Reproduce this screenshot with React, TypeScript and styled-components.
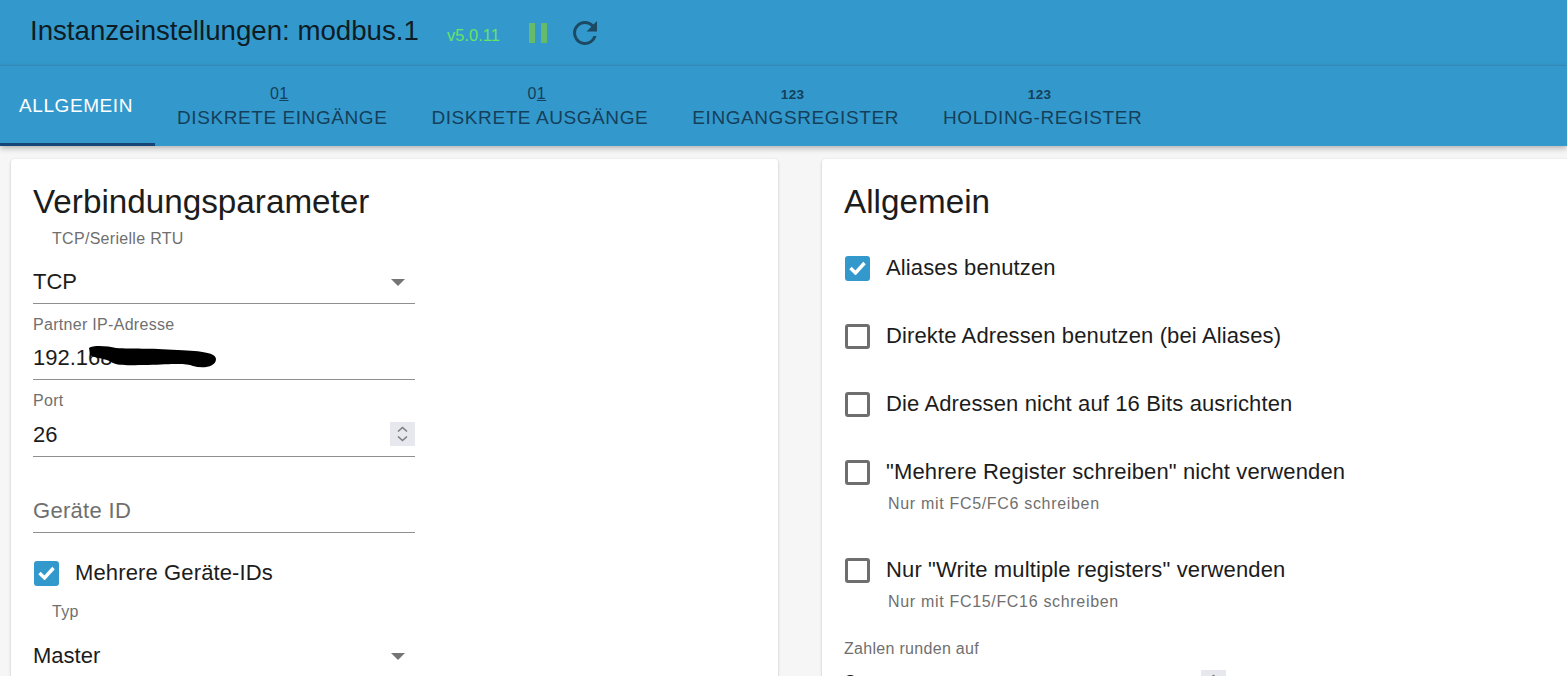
import React from "react";
import styled, { createGlobalStyle } from "styled-components";

const Global = createGlobalStyle`
  html, body { margin: 0; padding: 0; height: 100%; overflow: hidden; background: #f6f6f6; }
  body { font-family: "Liberation Sans", Arial, sans-serif; color: #1c1c1c; }
  #root { height: 100%; }
`;

const Page = styled.div`
  height: 676px;
  overflow: hidden;
  display: flex;
  flex-direction: column;
`;

const TitleBar = styled.header`
  height: 65px;
  flex: none;
  background: #3399cc;
  display: flex;
  align-items: center;
  padding-left: 30px;
  border-bottom: 1px solid #3a90bf;
`;

const Title = styled.h1`
  margin: 0 0 4px;
  font-size: 27.65px;
  font-weight: 400;
  line-height: 30px;
  color: #0e1c26;
  width: 417px;
  white-space: nowrap;
`;

const Version = styled.span`
  font-size: 16.5px;
  color: #66e466;
  width: 82px;
  margin-top: 5px;
`;

const PauseIcon = styled.svg`
  width: 18px;
  height: 20px;
  fill: #66bb6a;
  margin-right: 20px;
`;

const RefreshIcon = styled.svg`
  width: 36px;
  height: 36px;
  fill: #1d4a63;
`;

const TabBar = styled.nav`
  height: 80px;
  flex: none;
  background: #3399cc;
  display: flex;
  box-shadow: 0 2px 6px rgba(0, 0, 0, 0.3);
  position: relative;
  z-index: 1;
`;

const Tab = styled.div<{ $active?: boolean }>`
  box-sizing: border-box;
  padding: 0 22px 0 ${(p) => (p.$active ? "19px" : "22px")};
  display: flex;
  flex-direction: column;
  align-items: center;
  justify-content: flex-end;
  padding-bottom: ${(p) => (p.$active ? "27px" : "15px")};
  font-size: 19px;
  line-height: 21px;
  letter-spacing: 0.58px;
  white-space: nowrap;
  color: ${(p) => (p.$active ? "#ffffff" : "#153f5a")};
  border-bottom: 3px solid ${(p) => (p.$active ? "#164477" : "transparent")};
`;

const TabGlyph = styled.span<{ $bold?: boolean }>`
  font-size: ${(p) => (p.$bold ? "13.5px" : "16px")};
  font-weight: ${(p) => (p.$bold ? 700 : 400)};
  line-height: 16px;
  letter-spacing: 0.4px;
  margin: 0 6px ${(p) => (p.$bold ? "4px" : "5px")} 0;
  u { text-underline-offset: 1px; }
`;

const Columns = styled.main`
  flex: 1;
  min-height: 0;
  display: grid;
  grid-template-columns: 767px 767px;
  column-gap: 44px;
  padding: 13px 0 0 11px;
`;

const Card = styled.section`
  background: #ffffff;
  border-radius: 4px;
  box-shadow: 0 1px 3px rgba(0, 0, 0, 0.22);
  padding: 20px 22px 0;
  height: 700px;
`;

const CardTitle = styled.h2`
  margin: 0;
  height: 44px;
  font-size: 33.25px;
  font-weight: 400;
  line-height: 46px;
  color: #1c1c1c;
`;

const Field = styled.div<{ $pad: number }>`
  width: 382px;
  padding-top: ${(p) => p.$pad}px;
  border-bottom: 1px solid #8f8f8f;
  display: flex;
  flex-direction: column;
  position: relative;
`;

const FieldLabel = styled.label<{ $indent?: boolean; $top?: number }>`
  display: block;
  font-size: 16px;
  line-height: 18px;
  letter-spacing: 0.3px;
  color: #6f6f6f;
  padding-left: ${(p) => (p.$indent ? "19px" : "0")};
  margin-top: ${(p) => p.$top ?? 0}px;
`;

const ValueRow = styled.div<{ $top: number }>`
  box-sizing: border-box;
  height: 44px;
  padding-top: 2px;
  margin-top: ${(p) => p.$top}px;
  display: flex;
  align-items: center;
  justify-content: space-between;
  font-size: 22px;
  color: #1c1c1c;
`;

const Placeholder = styled.span`
  color: #6f6f6f;
  letter-spacing: 0.3px;
`;

const SelectArrow = styled.svg`
  width: 14px;
  height: 7px;
  fill: #757575;
  margin-right: 10px;
`;

const Spinner = styled.span`
  width: 25px;
  height: 24px;
  margin-bottom: 2px;
  background: #e7e7ee;
  display: flex;
  align-items: center;
  justify-content: center;
`;

const SpinnerIcon = styled.svg`
  width: 13px;
  height: 18px;
  fill: none;
  stroke: #7c7c82;
  stroke-width: 1.6;
`;

const Redaction = styled.svg`
  position: absolute;
  left: 55px;
  top: 41px;
  width: 130px;
  height: 24px;
  fill: #000;
`;

const CheckRow = styled.div<{ $mt: number }>`
  display: flex;
  align-items: center;
  gap: 16px;
  margin-top: ${(p) => p.$mt}px;
  padding-left: 1px;
  font-size: 22px;
  line-height: 26px;
  color: #1c1c1c;
  letter-spacing: 0.13px;
`;

const Box = styled.span<{ $checked?: boolean }>`
  width: 25px;
  height: 25px;
  box-sizing: border-box;
  border-radius: 3px;
  flex: none;
  display: flex;
  align-items: center;
  justify-content: center;
  background: ${(p) => (p.$checked ? "#3399cc" : "#fff")};
  border: ${(p) => (p.$checked ? "none" : "3px solid #6e6e6e")};
`;

const CheckMark = styled.svg`
  width: 17px;
  height: 14px;
  fill: none;
  stroke: #fff;
  stroke-width: 3.4;
`;

const Hint = styled.div`
  font-size: 16px;
  line-height: 18px;
  color: #6f6f6f;
  margin: 10px 0 0 44px;
  letter-spacing: 0.68px;
`;

const SmallLabel = styled.div`
  font-size: 16px;
  line-height: 18px;
  color: #6f6f6f;
  margin-top: 29px;
  letter-spacing: 0.3px;
`;

const CutRow = styled.div`
  width: 382px;
  height: 26px;
  display: flex;
  align-items: center;
  justify-content: space-between;
  font-size: 22px;
  margin-top: 12px;
`;

const Arrow = () => (
  <SelectArrow viewBox="0 0 14 7"><path d="M0 0h14L7 7z" /></SelectArrow>
);

const Checkbox = ({ checked }: { checked?: boolean }) => (
  <Box $checked={checked}>
    {checked && (
      <CheckMark viewBox="0 0 17 14"><path d="M1.5 7l5 5L15.5 2" /></CheckMark>
    )}
  </Box>
);

const SpinnerGlyph = () => (
  <Spinner>
    <SpinnerIcon viewBox="0 0 13 18"><path d="M2 6.5l4.5-4 4.5 4M2 11.5l4.5 4 4.5-4" /></SpinnerIcon>
  </Spinner>
);

export default function App() {
  return (
    <Page>
      <Global />
      <TitleBar>
        <Title>Instanzeinstellungen: modbus.1</Title>
        <Version>v5.0.11</Version>
        <PauseIcon viewBox="0 0 18 20"><path d="M0 0h6v20H0zM12 0h6v20h-6z" /></PauseIcon>
        <RefreshIcon viewBox="0 0 24 24">
          <path d="M17.65 6.35A7.96 7.96 0 0 0 12 4a8 8 0 1 0 7.73 10h-2.08A6 6 0 1 1 12 6c1.66 0 3.14.69 4.22 1.78L13 11h7V4l-2.35 2.35z" />
        </RefreshIcon>
      </TitleBar>
      <TabBar>
        <Tab $active>ALLGEMEIN</Tab>
        <Tab><TabGlyph>0<u>1</u></TabGlyph>DISKRETE EINGÄNGE</Tab>
        <Tab><TabGlyph>0<u>1</u></TabGlyph>DISKRETE AUSGÄNGE</Tab>
        <Tab><TabGlyph $bold>123</TabGlyph>EINGANGSREGISTER</Tab>
        <Tab><TabGlyph $bold>123</TabGlyph>HOLDING-REGISTER</Tab>
      </TabBar>
      <Columns>
        <Card>
          <CardTitle>Verbindungsparameter</CardTitle>
          <Field $pad={7}>
            <FieldLabel $indent>TCP/Serielle RTU</FieldLabel>
            <ValueRow $top={11}>TCP<Arrow /></ValueRow>
          </Field>
          <Field $pad={12}>
            <FieldLabel>Partner IP-Adresse</FieldLabel>
            <ValueRow $top={1}>
              192.168
              <Redaction viewBox="0 0 130 24">
                <path d="M1 3C5 0 20 1 28 3C45 4 60 3 90 5C115 6 128 8 128 14C128 22 115 24 105 21C98 18 85 19 60 20C45 20 30 21 25 18C15 12 8 14 2 10Z" />
              </Redaction>
            </ValueRow>
          </Field>
          <Field $pad={12}>
            <FieldLabel>Port</FieldLabel>
            <ValueRow $top={2}>26<SpinnerGlyph /></ValueRow>
          </Field>
          <Field $pad={31}>
            <ValueRow $top={0}><Placeholder>Geräte ID</Placeholder></ValueRow>
          </Field>
          <CheckRow $mt={27}><Checkbox checked />Mehrere Geräte-IDs</CheckRow>
          <FieldLabel $indent $top={17}>Typ</FieldLabel>
          <Field $pad={12}>
            <ValueRow $top={0}>Master<Arrow /></ValueRow>
          </Field>
        </Card>
        <Card>
          <CardTitle>Allgemein</CardTitle>
          <CheckRow $mt={32}><Checkbox checked />Aliases benutzen</CheckRow>
          <CheckRow $mt={42}><Checkbox />Direkte Adressen benutzen (bei Aliases)</CheckRow>
          <CheckRow $mt={42}><Checkbox />Die Adressen nicht auf 16 Bits ausrichten</CheckRow>
          <CheckRow $mt={42}><Checkbox />"Mehrere Register schreiben" nicht verwenden</CheckRow>
          <Hint>Nur mit FC5/FC6 schreiben</Hint>
          <CheckRow $mt={44}><Checkbox />Nur "Write multiple registers" verwenden</CheckRow>
          <Hint>Nur mit FC15/FC16 schreiben</Hint>
          <SmallLabel>Zahlen runden auf</SmallLabel>
          <CutRow>2<SpinnerGlyph /></CutRow>
        </Card>
      </Columns>
    </Page>
  );
}
